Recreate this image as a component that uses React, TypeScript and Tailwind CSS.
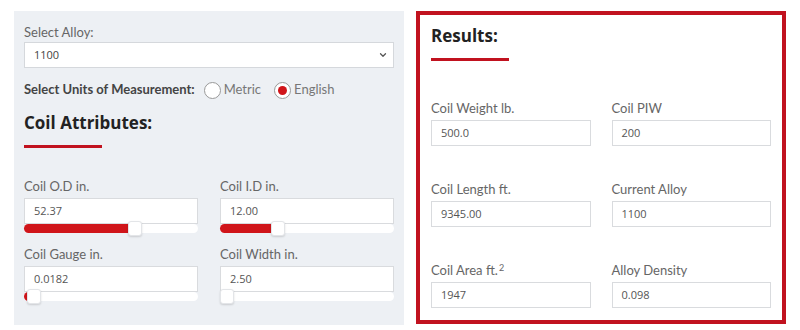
import { ChevronDown } from "lucide-react";

const font = { fontFamily: 'Lato, "Open Sans", "Liberation Sans", sans-serif' };
const heading = { fontFamily: '"Open Sans", "Liberation Sans", sans-serif' };

interface SliderField {
  label: string;
  value: string;
  fill: number;
}

const sliderFields: SliderField[] = [
  { label: "Coil O.D in.", value: "52.37", fill: 63 },
  { label: "Coil I.D in.", value: "12.00", fill: 33 },
  { label: "Coil Gauge in.", value: "0.0182", fill: 5 },
  { label: "Coil Width in.", value: "2.50", fill: 0 },
];

const results = [
  { label: "Coil Weight lb.", value: "500.0" },
  { label: "Coil PIW", value: "200" },
  { label: "Coil Length ft.", value: "9345.00" },
  { label: "Current Alloy", value: "1100" },
  { label: "Coil Area ft.", value: "1947", sup: "2" },
  { label: "Alloy Density", value: "0.098" },
];

const Slider = ({ fill }: { fill: number }) => (
  <div className="relative h-[9px] bg-white rounded-full">
    {fill > 0 && (
      <div
        className="absolute left-0 top-0 h-full bg-[#d0151a] rounded-l-full"
        style={{ width: `${fill}%` }}
      />
    )}
    <div
      className="absolute top-[-3px] w-[14px] h-[15px] bg-white rounded-[3px] border border-[#e3e5e8] shadow-[0_1px_2px_rgba(0,0,0,0.15)]"
      style={{ left: `calc(${fill}% - ${fill > 0 ? 6 : 0}px)` }}
    />
  </div>
);

const Box = ({ value }: { value: string }) => (
  <div
    className="h-[26px] bg-white border border-[#d9dbde] pl-[9px] flex items-center text-[11px] text-[#555]"
    style={heading}
  >
    {value}
  </div>
);

export default function App() {
  return (
    <div className="w-[800px] h-[330px] bg-white flex pt-[11px] pl-[14px]" style={font}>
      {/* Calculator inputs */}
      <div className="w-[390px] h-[314px] bg-[#edf0f4] px-[10px] pt-[11px]">
        <p className="text-[13px] leading-[20px] text-[#666]">Select Alloy:</p>
        <div
          className="h-[26px] bg-white border border-[#d5d8dc] flex items-center justify-between pl-[9px] pr-[5px] text-[11px] text-[#444]"
          style={heading}
        >
          1100
          <ChevronDown className="w-[10px] h-[10px] text-[#555]" strokeWidth={3} />
        </div>
        <div className="mt-[12px] flex items-center h-[20px] text-[13px]">
          <span className="font-bold text-[#444]">Select Units of Measurement:</span>
          <span className="ml-[9px] w-[17px] h-[17px] rounded-full border border-[#999] bg-white" />
          <span className="ml-[3px] text-[#777]">Metric</span>
          <span className="ml-[13px] w-[17px] h-[17px] rounded-full border border-[#999] bg-white flex items-center justify-center">
            <span className="w-[9px] h-[9px] rounded-full bg-[#d0151a]" />
          </span>
          <span className="ml-[3px] text-[#777]">English</span>
        </div>
        <h2 className="mt-[11px] text-[17px] leading-[24px] font-bold text-[#222]" style={heading}>
          Coil Attributes:
        </h2>
        <div className="mt-[10px] w-[78px] h-[3px] bg-[#c1121f]" />

        <div className="mt-[28px] grid grid-cols-2 gap-x-[22px] gap-y-[11px]">
          {sliderFields.map((f) => (
            <div key={f.label}>
              <p className="text-[13px] leading-[20px] text-[#666] mb-[2px]">{f.label}</p>
              <Box value={f.value} />
              <Slider fill={f.fill} />
            </div>
          ))}
        </div>
      </div>

      {/* Results */}
      <div className="ml-[12px] w-[370px] h-[313px] border-4 border-[#c1121f] px-[11px] pt-[9px]">
        <h2 className="text-[17px] leading-[24px] font-bold text-[#222]" style={heading}>
          Results:
        </h2>
        <div className="mt-[10px] w-[78px] h-[3px] bg-[#c1121f]" />
        <div className="mt-[37px] grid grid-cols-2 gap-x-[21px] gap-y-[33px]">
          {results.map((r) => (
            <div key={r.label}>
              <p className="text-[13px] leading-[20px] text-[#666] mb-[2px]">
                {r.label}
                {r.sup && <sup className="text-[9px] ml-[1px]">{r.sup}</sup>}
              </p>
              <Box value={r.value} />
            </div>
          ))}
        </div>
      </div>
    </div>
  );
}
